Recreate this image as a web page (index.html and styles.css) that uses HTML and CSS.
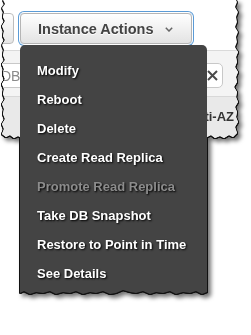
FILE: index.html
```html
<!DOCTYPE html>
<html lang="en">
<head>
<meta charset="UTF-8" />
<title>Instance Actions</title>
<link rel="stylesheet" href="styles.css">
</head>
<body>
  <div class="shot">
    <div class="sheet">
      <div class="toolbar">
        <span class="btn-stub"></span>
        <button class="btn-actions">Instance Actions
          <svg class="caret" width="8" height="5" viewBox="0 0 8 5"><polyline points="0.8,0.8 4,4 7.2,0.8" fill="none" stroke="#666" stroke-width="1.5"/></svg>
        </button>
      </div>
      <div class="search-row">
        <div class="search-box">DB</div>
        <span class="clear-btn">
          <svg width="11" height="11" viewBox="0 0 11 11"><path d="M1 1L10 10M10 1L1 10" stroke="#4a4a4a" stroke-width="2"/></svg>
        </span>
      </div>
      <div class="grid-row">
        <span class="cell">ti-AZ</span>
      </div>
    </div>

    <ul class="menu">
      <li>Modify</li>
      <li>Reboot</li>
      <li>Delete</li>
      <li>Create Read Replica</li>
      <li class="disabled">Promote Read Replica</li>
      <li>Take DB Snapshot</li>
      <li>Restore to Point in Time</li>
      <li>See Details</li>
    </ul>
  </div>
</body>
</html>
```

FILE: styles.css
```css
* {
  box-sizing: border-box;
}
body {
  margin: 0;
  background: #fff;
  font-family: 'Liberation Sans', Arial, sans-serif;
  overflow: hidden;
}
.shot {
  position: relative;
  margin-left: 2px;
  width: 240px;
  height: 305px;
  filter: drop-shadow(1px 0 0 #111) drop-shadow(-1px 0 0 #111) drop-shadow(0 1px 0 #111) drop-shadow(3px 3px 2px rgba(0, 0, 0, 0.55));
}
.sheet {
  width: 238px;
  height: 140px;
  background: #fff;
  overflow: hidden;
  clip-path: polygon(1px 0, 3px 4px, 0 8px, 2px 12px, 1px 17px, 3px 21px, 0 26px, 2px 31px, 1px 36px, 3px 40px, 0 45px, 2px 50px, 1px 55px, 3px 60px, 0 64px, 2px 69px, 1px 74px, 3px 79px, 0 84px, 2px 89px, 1px 94px, 3px 99px, 0 104px, 2px 109px, 1px 114px, 3px 119px, 0 124px, 2px 129px, 0 134px, 4px 137px, 8px 135px, 12px 138px, 16px 136px, 20px 138px, 120px 137px, 205px 137px, 209px 135px, 213px 138px, 218px 136px, 222px 138px, 227px 135px, 231px 137px, 235px 133px, 233px 127px, 236px 122px, 234px 117px, 235px 112px, 233px 107px, 236px 102px, 234px 97px, 235px 92px, 232px 87px, 235px 82px, 234px 77px, 236px 72px, 233px 67px, 235px 62px, 234px 57px, 236px 52px, 233px 47px, 235px 42px, 234px 37px, 236px 32px, 233px 27px, 235px 22px, 234px 17px, 236px 12px, 233px 7px, 235px 2px, 234px 0);
}

/* top toolbar with the actions button */
.toolbar {
  display: flex;
  align-items: flex-start;
  gap: 6px;
  height: 51px;
  padding-top: 13px;
  border-bottom: 1px solid #dadada;
}
.btn-stub {
  width: 32px;
  height: 31px;
  margin-left: -20px;
  border: 1px solid #bdbdbd;
  border-radius: 4px;
  background: linear-gradient(#fff, #e6e6e6);
}
.btn-actions {
  display: flex;
  align-items: center;
  height: 31px;
  padding: 0 18px 0 17px;
  border: 1px solid #b5b5b5;
  border-radius: 4px;
  background: linear-gradient(#fff, #e3e3e3);
  box-shadow: 0 0 0 1px #fff, 0 0 0 2px #5b9bd6;
  font-family: 'Liberation Sans', Arial, sans-serif;
  font-weight: bold;
  font-size: 14.5px;
  color: #444;
  text-shadow: 0 1px 0 #fff;
}
.caret {
  margin-left: 11px;
  margin-top: 1px;
}

/* filter row */
.search-row {
  display: flex;
  align-items: flex-start;
  gap: 2px;
  height: 46px;
  padding-top: 12px;
  background: #f4f4f4;
  border-bottom: 1px solid #d8d8d8;
}
.search-box {
  width: 207px;
  height: 25px;
  margin-left: -10px;
  padding: 4px 8px;
  border: 1px solid #c8c8c8;
  border-radius: 4px;
  background: #fff;
  font-size: 14px;
  color: #8a8a8a;
  white-space: nowrap;
  overflow: hidden;
}
.clear-btn {
  display: flex;
  align-items: center;
  justify-content: center;
  width: 22px;
  height: 25px;
  border: 1px solid #c8c8c8;
  border-radius: 5px;
  background: #fff;
}

/* grid row behind the menu */
.grid-row {
  display: flex;
  justify-content: flex-end;
  height: 44px;
  padding: 12px 6px 0 0;
  background: #e9e9e9;
}
.cell {
  font-weight: bold;
  font-size: 13px;
  line-height: 15px;
  color: #333;
}

/* dropdown */
.menu {
  position: absolute;
  left: 18px;
  top: 45px;
  width: 187px;
  height: 252px;
  margin: 0;
  padding: 11px 0 0 17px;
  list-style: none;
  background: #444;
  border-radius: 5px 5px 0 0;
  clip-path: polygon(0 0, 100% 0, 100% 247px, 182px 249px, 176px 246px, 170px 248px, 163px 247px, 156px 249px, 150px 246px, 143px 248px, 136px 247px, 130px 249px, 123px 246px, 116px 248px, 110px 247px, 103px 245px, 96px 248px, 90px 249px, 83px 246px, 76px 248px, 70px 247px, 63px 249px, 56px 246px, 50px 248px, 43px 247px, 36px 249px, 30px 246px, 23px 248px, 16px 247px, 10px 249px, 4px 246px, 0 248px);
}
.menu li {
  height: 29px;
  line-height: 29px;
  font-weight: bold;
  font-size: 13px;
  color: #fff;
  text-shadow: 1px 1px 2px #000;
  white-space: nowrap;
}
.menu li.disabled {
  color: #8c8c8c;
}
```
